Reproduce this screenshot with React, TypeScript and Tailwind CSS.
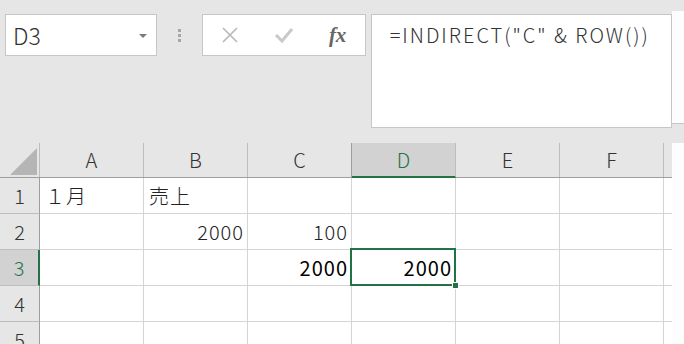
import React from 'react';

const cols = ['A', 'B', 'C', 'D', 'E', 'F'];

type Cell = { text?: string; align?: 'left' | 'right'; strong?: boolean };

const rows: Cell[][] = [
  [{ text: '１月' }, { text: '売上' }, {}, {}, {}, {}],
  [{}, { text: '2000', align: 'right' }, { text: '100', align: 'right' }, {}, {}, {}],
  [{}, {}, { text: '2000', align: 'right', strong: true }, { text: '2000', align: 'right', strong: true }, {}, {}],
  [{}, {}, {}, {}, {}, {}],
  [{}, {}, {}, {}, {}, {}],
];

const font = { fontFamily: '"Noto Sans CJK JP", "Noto Sans", sans-serif' };

export default function App() {
  return (
    <div className="w-[684px] h-[344px] overflow-hidden bg-[#e6e6e6] text-[#222]" style={font}>
      {/* formula bar */}
      <div className="flex items-start h-[143px] pt-[14px] pl-[5px]">
        <div className="w-[152px] h-[42px] bg-white border border-[#c6c6c6] flex items-center justify-between pl-[7px] pr-[9px]">
          <span className="text-[23px] leading-none text-[#333] font-light">D3</span>
          <span className="w-0 h-0 border-l-[4px] border-r-[4px] border-t-[4px] border-l-transparent border-r-transparent border-t-[#7a7a7a] mt-[2px]" />
        </div>
        <div className="w-[45px] h-[42px] flex flex-col items-center justify-center gap-[2px]">
          <span className="w-[3px] h-[3px] bg-[#a6a6a6]" />
          <span className="w-[3px] h-[3px] bg-[#a6a6a6]" />
          <span className="w-[3px] h-[3px] bg-[#a6a6a6]" />
        </div>
        <div className="w-[164px] h-[42px] bg-white border border-[#c6c6c6] flex items-center">
          <div className="w-[54px] flex justify-center">
            <svg width="18" height="18" viewBox="0 0 18 18">
              <path d="M2 2 L16 16 M16 2 L2 16" stroke="#b8b8b8" strokeWidth="1.6" fill="none" />
            </svg>
          </div>
          <div className="w-[54px] flex justify-center">
            <svg width="20" height="18" viewBox="0 0 20 18">
              <path d="M2 9 L8 15 L18 3" stroke="#c9c9c9" strokeWidth="3" fill="none" />
            </svg>
          </div>
          <div className="w-[54px] flex justify-center">
            <span className="italic font-bold text-[21px] leading-none text-[#666]" style={{ fontFamily: '"Liberation Serif", serif' }}>fx</span>
          </div>
        </div>
        <div className="ml-[5px] w-[302px] h-[114px] bg-white border border-[#c6c6c6] pl-[18px] pt-[6px]">
          <span className="text-[20px] leading-[28px] font-light text-[#333] tracking-[2px]">=INDIRECT("C" &amp; ROW())</span>
        </div>
        <div className="mt-[-3px] w-[12px] h-[113px] bg-[#fdfdfd] border-b border-[#c6c6c6]" />
      </div>

      {/* sheet */}
      <div className="flex">
        <div className="w-[672px]">
          {/* column headers */}
          <div className="flex h-[35px] border-b border-[#9e9e9e]">
            <div className="w-[40px] shrink-0 border-r border-[#bdbdbd] flex items-end pl-[10px] pb-[2px]">
              <svg width="27" height="27" viewBox="0 0 27 27">
                <polygon points="27,0 27,27 0,27" fill="#b5b5b5" />
              </svg>
            </div>
            {cols.map((c) => (
              <div
                key={c}
                className={
                  c === 'D'
                    ? 'w-[104px] shrink-0 bg-[#d2d2d2] border-r border-[#bdbdbd] border-b-2 border-b-[#217346] -mb-[1px] flex items-center justify-center text-[20px] font-light text-[#217346]'
                    : c === 'C'
                      ? 'w-[104px] shrink-0 border-r border-[#9e9e9e] flex items-center justify-center text-[20px] font-light text-[#333]'
                      : 'w-[104px] shrink-0 border-r border-[#bdbdbd] flex items-center justify-center text-[20px] font-light text-[#333]'
                }
              >
                {c}
              </div>
            ))}
            <div className="flex-1" />
          </div>
          {/* rows */}
          {rows.map((r, i) => (
            <div key={i} className="flex h-[36px]">
              <div
                className={
                  i === 2
                    ? 'w-[40px] shrink-0 bg-[#d2d2d2] border-r-2 border-[#217346] border-b border-b-[#bdbdbd] flex items-center justify-center text-[20px] font-light text-[#217346]'
                    : 'w-[40px] shrink-0 border-r border-[#9e9e9e] border-b border-b-[#bdbdbd] flex items-center justify-center text-[20px] font-light text-[#333]'
                }
              >
                {i + 1}
              </div>
              {r.map((cell, j) => {
                const selected = i === 2 && j === 3;
                return (
                  <div
                    key={j}
                    className={
                      'relative w-[104px] shrink-0 bg-white border-r border-b border-[#d4d4d4] flex items-center text-[20px] tracking-[1px] ' +
                      (cell.align === 'right' ? 'justify-end pr-[3px] ' : 'pl-[5px] ') +
                      (cell.strong ? 'text-black font-normal' : 'text-[#222] font-light') +
                      (selected ? ' z-10' : '')
                    }
                  >
                    {cell.text}
                    {selected && (
                      <>
                        <div className="absolute left-[-2px] top-[-2px] w-[106px] h-[38px] border-2 border-[#217346]" />
                        <div className="absolute right-[-4px] bottom-[-4px] w-[7px] h-[7px] bg-[#217346] border border-white" />
                      </>
                    )}
                  </div>
                );
              })}
              <div className="flex-1 bg-white border-b border-[#d4d4d4]" />
            </div>
          ))}
        </div>
        <div className="flex-1 bg-[#fdfdfd]" />
      </div>
    </div>
  );
}
